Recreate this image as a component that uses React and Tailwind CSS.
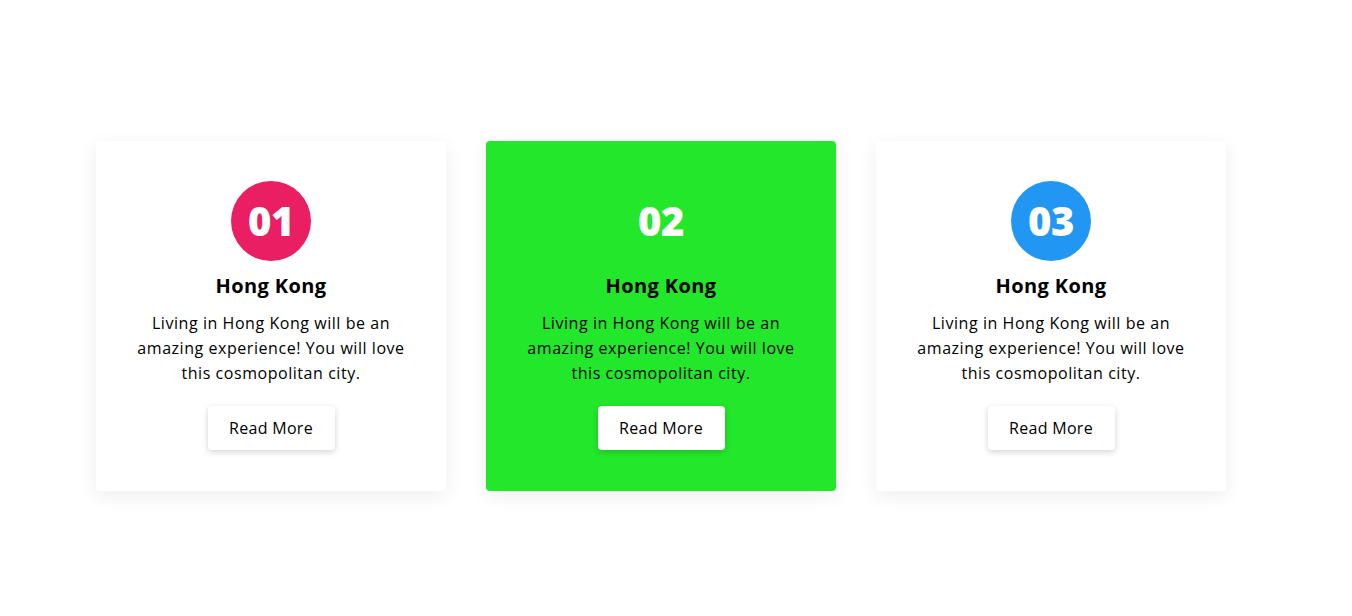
import React from "react";

const cards = [
  { num: "01", circle: "bg-[#e91e63]", card: "bg-white" },
  { num: "02", circle: "bg-transparent", card: "bg-[#22e72a]" },
  { num: "03", circle: "bg-[#2196f3]", card: "bg-white" },
];

export default function App() {
  return (
    <div className="min-h-[616px] w-full bg-white pl-[96px] pt-[141px] font-['Open_Sans',sans-serif] text-black">
      <div className="flex gap-[40px]">
        {cards.map((c) => (
          <div
            key={c.num}
            className={`${c.card} flex h-[350px] w-[350px] flex-col items-center rounded-[4px] px-[20px] pt-[40px] shadow-[0_5px_20px_rgba(0,0,0,0.07)]`}
          >
            <div
              className={`${c.circle} flex h-[80px] w-[80px] items-center justify-center rounded-full text-[40px] font-extrabold leading-none tracking-[-0.5px] text-white`}
            >
              {c.num}
            </div>
            <h3 className="mt-[10px] text-[20px] font-bold leading-[30px] tracking-[0.4px]">Hong Kong</h3>
            <p className="mt-[10px] text-center text-[16px] leading-[25px] tracking-[0.55px]">
              Living in Hong Kong will be an
              <br />
              amazing experience! You will love
              <br />
              this cosmopolitan city.
            </p>
            <button className="mt-[20px] h-[44px] w-[127px] rounded-[4px] bg-white text-[16px] font-medium tracking-[0.3px] shadow-[0_2px_6px_rgba(0,0,0,0.18)]">
              Read More
            </button>
          </div>
        ))}
      </div>
    </div>
  );
}
